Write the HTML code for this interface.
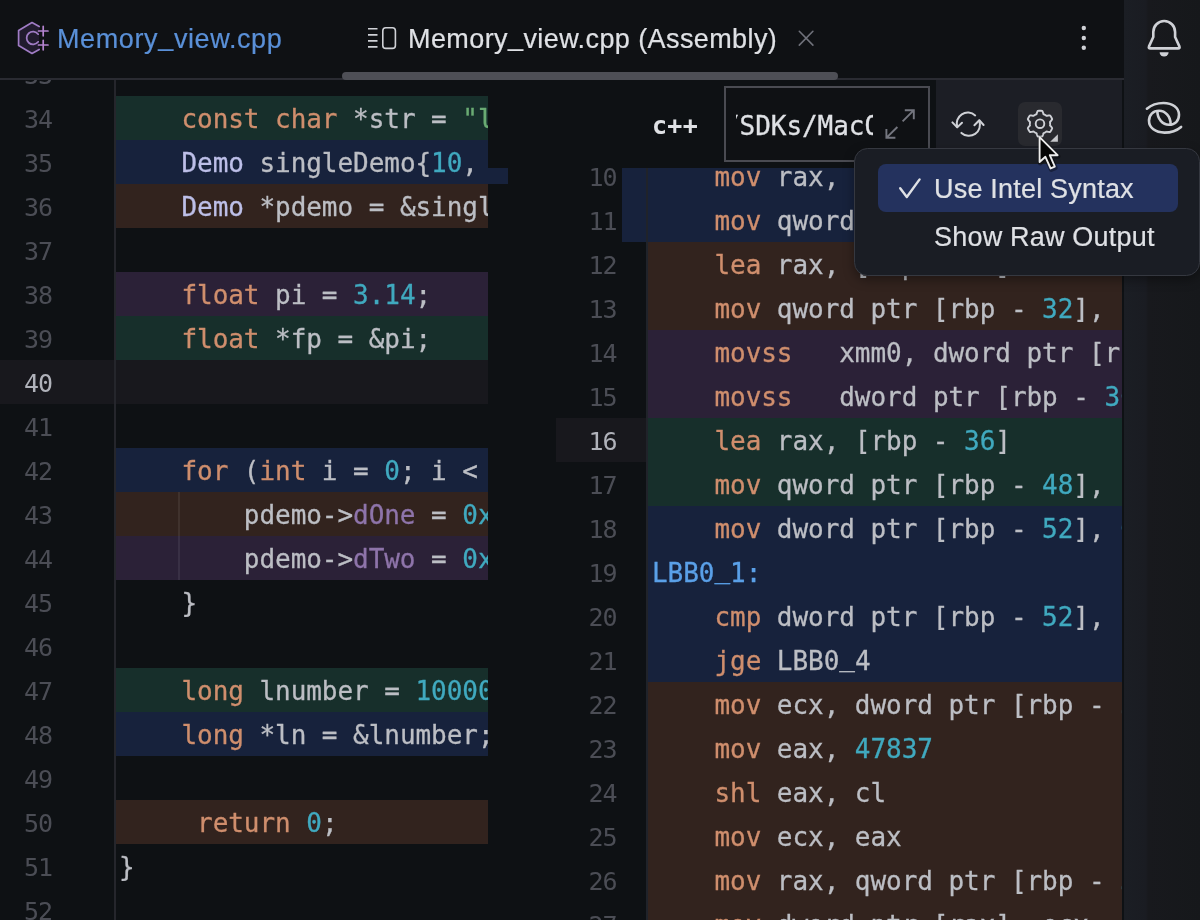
<!DOCTYPE html>
<html lang="en">
<head>
<meta charset="utf-8">
<title>Memory_view.cpp (Assembly)</title>
<style>
*{box-sizing:border-box;margin:0;padding:0}
html,body{width:1200px;height:920px;overflow:hidden;background:#0e1114}
body{position:relative;font-family:"Liberation Sans",sans-serif;color:#dfe1e5}
.abs{position:absolute}
.u{position:relative;top:-4px}
.tabtxt .u{top:-3.5px}
.code,.ln,.tabtxt,.mitxt,.gs{will-change:transform}
.mono{font-family:"DejaVu Sans Mono","Liberation Mono",monospace;font-size:26px;letter-spacing:-0.05px;white-space:pre}
#tabbar{left:0;top:0;width:1200px;height:80px;background:#0f1114;border-bottom:2px solid #2a2b32}
.tabtxt{-webkit-text-stroke:.2px;position:absolute;top:23px;font-size:27px;line-height:32px;letter-spacing:.62px;white-space:nowrap}
#thumb{left:342px;top:72px;width:496px;height:8px;border-radius:4px;background:#4e4f56}
#left{left:0;top:80px;width:488px;height:840px;overflow:hidden}
#lgutline{left:114px;top:80px;width:2px;height:840px;background:#25262c}
#lstrip{left:488px;top:168px;width:20px;height:16px;background:#17223c}
.ln{position:absolute;left:0;width:52px;text-align:right;color:#4b4d55;height:44px;line-height:48px;font-size:25px;letter-spacing:-1px;padding-right:0}
.lncur{color:#b0b2ba}
.band{position:absolute;height:44px}
.code{position:absolute;height:44px;line-height:46px;color:#bcbec4;-webkit-text-stroke:.3px}
.g{background:#172f2b}.b{background:#17223c}.o{background:#32231e}.p{background:#2b2137}.cur{background:#18181d}
.k{color:#cf8e6d}.n{color:#40a9bf}.s{color:#6aab73}.t{color:#bdbfe8}.f{color:#8e74aa}.l{color:#5aa0e8}
#right{left:556px;top:168px;width:566px;height:752px;overflow:hidden}
#sidebar{left:1123.5px;top:0;width:77px;height:920px;background:linear-gradient(90deg,#1b1e24 0,#1a1c22 22px,#18191d 24px,#16181b 100%)}
#popup{left:854px;top:147.5px;width:346px;height:128px;border-radius:13.5px;background:#1a1d24;border:1.5px solid #353840;box-shadow:0 4px 11px rgba(0,0,0,.36)}
.mi{position:absolute;left:22.5px;width:300px;height:48px;border-radius:8px;font-size:27px;line-height:50px;padding-left:56px;letter-spacing:.2px;white-space:nowrap;color:#dfe1e5;-webkit-text-stroke:.2px}
</style>
</head>
<body>
<!-- LEFT EDITOR -->
<div id="left" class="abs mono">
<div class="ln" style="top:-28px">33</div>
<div class="band g" style="left:116px;top:16px;width:372px"></div>
<div class="ln" style="top:16px">34</div>
<div class="code" style="left:119.1px;top:16px">    <span class="k">const</span> <span class="k">char</span> *str = <span class="s">"lorem ipsum"</span>;</div>
<div class="band b" style="left:116px;top:60px;width:372px"></div>
<div class="ln" style="top:60px">35</div>
<div class="code" style="left:119.1px;top:60px">    <span class="t">Demo</span> singleDemo{<span class="n">10</span>, <span class="n">20</span>};</div>
<div class="band o" style="left:116px;top:104px;width:372px"></div>
<div class="ln" style="top:104px">36</div>
<div class="code" style="left:119.1px;top:104px">    <span class="t">Demo</span> *pdemo = &amp;singleDemo;</div>
<div class="ln" style="top:148px">37</div>
<div class="band p" style="left:116px;top:192px;width:372px"></div>
<div class="ln" style="top:192px">38</div>
<div class="code" style="left:119.1px;top:192px">    <span class="k">float</span> pi = <span class="n">3.14</span>;</div>
<div class="band g" style="left:116px;top:236px;width:372px"></div>
<div class="ln" style="top:236px">39</div>
<div class="code" style="left:119.1px;top:236px">    <span class="k">float</span> *fp = &amp;pi;</div>
<div class="band cur" style="left:0;top:280px;width:488px"></div>
<div class="ln lncur" style="top:280px">40</div>
<div class="ln" style="top:324px">41</div>
<div class="band b" style="left:116px;top:368px;width:372px"></div>
<div class="ln" style="top:368px">42</div>
<div class="code" style="left:119.1px;top:368px">    <span class="k">for</span> (<span class="k">int</span> i = <span class="n">0</span>; i &lt; <span class="n">10</span>; i++) {</div>
<div class="band o" style="left:116px;top:412px;width:372px"></div>
<div class="ln" style="top:412px">43</div>
<div class="code" style="left:119.1px;top:412px">        pdemo-&gt;<span class="f">dOne</span> = <span class="n">0xAA</span>;</div>
<div class="band p" style="left:116px;top:456px;width:372px"></div>
<div class="ln" style="top:456px">44</div>
<div class="code" style="left:119.1px;top:456px">        pdemo-&gt;<span class="f">dTwo</span> = <span class="n">0xBB</span>;</div>
<div class="ln" style="top:500px">45</div>
<div class="code" style="left:119.1px;top:500px">    }</div>
<div class="ln" style="top:544px">46</div>
<div class="band g" style="left:116px;top:588px;width:372px"></div>
<div class="ln" style="top:588px">47</div>
<div class="code" style="left:119.1px;top:588px">    <span class="k">long</span> lnumber = <span class="n">100000</span>;</div>
<div class="band b" style="left:116px;top:632px;width:372px"></div>
<div class="ln" style="top:632px">48</div>
<div class="code" style="left:119.1px;top:632px">    <span class="k">long</span> *ln = &amp;lnumber;</div>
<div class="ln" style="top:676px">49</div>
<div class="band o" style="left:116px;top:720px;width:372px"></div>
<div class="ln" style="top:720px">50</div>
<div class="code" style="left:119.1px;top:720px">     <span class="k">return</span> <span class="n">0</span>;</div>
<div class="ln" style="top:764px">51</div>
<div class="code" style="left:119.1px;top:764px">}</div>
<div class="ln" style="top:808px">52</div>
<div class="abs" style="left:178px;top:412px;width:1.5px;height:88px;background:rgba(255,255,255,.07)"></div>
</div>
<div id="lgutline" class="abs"></div>
<div id="lstrip" class="abs"></div>
<!-- RIGHT PANEL -->
<div id="right" class="abs mono">
<div class="band b" style="left:66px;top:-14px;width:500px"></div>
<div class="ln" style="left:0;width:60.5px;top:-14px">10</div>
<div class="code" style="left:95.60000000000002px;top:-14px">    <span class="k">mov</span> rax, qword ptr [rip + L<span class="u">_</span>.str]</div>
<div class="band b" style="left:66px;top:30px;width:500px"></div>
<div class="ln" style="left:0;width:60.5px;top:30px">11</div>
<div class="code" style="left:95.60000000000002px;top:30px">    <span class="k">mov</span> qword ptr [rbp - <span class="n">16</span>], rax</div>
<div class="band o" style="left:91px;top:74px;width:475px"></div>
<div class="ln" style="left:0;width:60.5px;top:74px">12</div>
<div class="code" style="left:95.60000000000002px;top:74px">    <span class="k">lea</span> rax, [rbp - <span class="n">24</span>]</div>
<div class="band o" style="left:91px;top:118px;width:475px"></div>
<div class="ln" style="left:0;width:60.5px;top:118px">13</div>
<div class="code" style="left:95.60000000000002px;top:118px">    <span class="k">mov</span> qword ptr [rbp - <span class="n">32</span>], rax</div>
<div class="band p" style="left:91px;top:162px;width:475px"></div>
<div class="ln" style="left:0;width:60.5px;top:162px">14</div>
<div class="code" style="left:95.60000000000002px;top:162px">    <span class="k">movss</span>   xmm0, dword ptr [rip + LCPI0<span class="u">_</span>0]</div>
<div class="band p" style="left:91px;top:206px;width:475px"></div>
<div class="ln" style="left:0;width:60.5px;top:206px">15</div>
<div class="code" style="left:95.60000000000002px;top:206px">    <span class="k">movss</span>   dword ptr [rbp - <span class="n">36</span>], xmm0</div>
<div class="band g" style="left:91px;top:250px;width:475px"></div>
<div class="band cur" style="left:0;top:250px;width:91px"></div>
<div class="ln lncur" style="left:0;width:60.5px;top:250px">16</div>
<div class="code" style="left:95.60000000000002px;top:250px">    <span class="k">lea</span> rax, [rbp - <span class="n">36</span>]</div>
<div class="band g" style="left:91px;top:294px;width:475px"></div>
<div class="ln" style="left:0;width:60.5px;top:294px">17</div>
<div class="code" style="left:95.60000000000002px;top:294px">    <span class="k">mov</span> qword ptr [rbp - <span class="n">48</span>], rax</div>
<div class="band b" style="left:91px;top:338px;width:475px"></div>
<div class="ln" style="left:0;width:60.5px;top:338px">18</div>
<div class="code" style="left:95.60000000000002px;top:338px">    <span class="k">mov</span> dword ptr [rbp - <span class="n">52</span>], <span class="n">0</span></div>
<div class="band b" style="left:91px;top:382px;width:475px"></div>
<div class="ln" style="left:0;width:60.5px;top:382px">19</div>
<div class="code" style="left:95.60000000000002px;top:382px"><span class="l">LBB0<span class="u">_</span>1:</span></div>
<div class="band b" style="left:91px;top:426px;width:475px"></div>
<div class="ln" style="left:0;width:60.5px;top:426px">20</div>
<div class="code" style="left:95.60000000000002px;top:426px">    <span class="k">cmp</span> dword ptr [rbp - <span class="n">52</span>], <span class="n">10</span></div>
<div class="band b" style="left:91px;top:470px;width:475px"></div>
<div class="ln" style="left:0;width:60.5px;top:470px">21</div>
<div class="code" style="left:95.60000000000002px;top:470px">    <span class="k">jge</span> LBB0<span class="u">_</span>4</div>
<div class="band o" style="left:91px;top:514px;width:475px"></div>
<div class="ln" style="left:0;width:60.5px;top:514px">22</div>
<div class="code" style="left:95.60000000000002px;top:514px">    <span class="k">mov</span> ecx, dword ptr [rbp - <span class="n">52</span>]</div>
<div class="band o" style="left:91px;top:558px;width:475px"></div>
<div class="ln" style="left:0;width:60.5px;top:558px">23</div>
<div class="code" style="left:95.60000000000002px;top:558px">    <span class="k">mov</span> eax, <span class="n">47837</span></div>
<div class="band o" style="left:91px;top:602px;width:475px"></div>
<div class="ln" style="left:0;width:60.5px;top:602px">24</div>
<div class="code" style="left:95.60000000000002px;top:602px">    <span class="k">shl</span> eax, cl</div>
<div class="band o" style="left:91px;top:646px;width:475px"></div>
<div class="ln" style="left:0;width:60.5px;top:646px">25</div>
<div class="code" style="left:95.60000000000002px;top:646px">    <span class="k">mov</span> ecx, eax</div>
<div class="band o" style="left:91px;top:690px;width:475px"></div>
<div class="ln" style="left:0;width:60.5px;top:690px">26</div>
<div class="code" style="left:95.60000000000002px;top:690px">    <span class="k">mov</span> rax, qword ptr [rbp - <span class="n">32</span>]</div>
<div class="band o" style="left:91px;top:734px;width:475px"></div>
<div class="ln" style="left:0;width:60.5px;top:734px">27</div>
<div class="code" style="left:95.60000000000002px;top:734px">    <span class="k">mov</span> dword ptr [rax], ecx</div>
<div class="abs" style="left:90px;top:0;width:2px;height:752px;background:#20232a"></div>
</div>
<!-- TOOLBAR -->
<div id="toolbar">
<div class="abs" style="left:936px;top:80px;width:186px;height:88px;background:#1c1e25"></div>
<div class="abs mono gs" style="left:651.5px;top:104px;height:44px;line-height:44px;color:#dfe1e5;font-weight:bold;font-size:25px;letter-spacing:.3px">c++</div>
<div class="abs" style="left:724px;top:86px;width:206px;height:76px;border:2px solid #4a4b52;background:#0f1114"></div>
<div class="abs mono gs" style="left:735.5px;top:104px;width:136.5px;height:44px;line-height:44px;overflow:hidden;color:#dfe1e5;-webkit-text-stroke:.3px"><span style="margin-left:-12px">/SDKs/MacOSX.sdk</span></div>
<svg class="abs" style="left:882px;top:106px" width="36" height="36" viewBox="882 106 36 36">
<path d="M897.4 127 L886.6 137.6 M886.4 129 V137.8 H895.4 M902.6 121.4 L913.6 110.4 M904.8 110.2 H913.8 V119.2" fill="none" stroke="#74767f" stroke-width="1.9" stroke-linecap="butt" stroke-linejoin="miter"/>
</svg>
<svg class="abs" style="left:948px;top:106px" width="40" height="36" viewBox="948 106 40 36">
<path d="M957.2 127 A11.1 11.1 0 0 1 975.2 115.4 M979.2 120.6 A11.1 11.1 0 0 1 961.4 132.9" fill="none" stroke="#cfd1d6" stroke-width="2" stroke-linecap="round"/>
<path d="M952.4 122.4 L957.2 127.4 L962 122.8 M974.4 125.2 L979.3 120.2 L983.6 125" fill="none" stroke="#cfd1d6" stroke-width="2" stroke-linecap="round" stroke-linejoin="round"/>
</svg>
<svg class="abs" style="left:1018px;top:102px" width="44" height="44" viewBox="1018 102 44 44">
<rect x="1018" y="102" width="44" height="44" rx="7" fill="#292a2f"/>
<path d="M1040.00 110.70 L1040.45 110.71 L1040.91 110.73 L1041.36 110.77 L1041.81 110.83 L1042.24 110.97 L1042.58 111.57 L1042.86 112.21 L1043.10 112.87 L1043.31 113.52 L1043.48 114.14 L1043.78 114.34 L1044.11 114.47 L1044.43 114.62 L1044.74 114.78 L1045.05 114.95 L1045.35 115.13 L1045.65 115.33 L1045.94 115.53 L1046.22 115.74 L1046.54 115.91 L1047.16 115.75 L1047.82 115.60 L1048.52 115.48 L1049.22 115.40 L1049.90 115.39 L1050.24 115.70 L1050.52 116.06 L1050.78 116.43 L1051.02 116.81 L1051.26 117.20 L1051.48 117.60 L1051.68 118.00 L1051.88 118.41 L1052.05 118.83 L1052.15 119.28 L1051.79 119.87 L1051.38 120.44 L1050.93 120.98 L1050.46 121.48 L1050.02 121.93 L1050.00 122.29 L1050.04 122.64 L1050.08 123.00 L1050.09 123.35 L1050.10 123.70 L1050.09 124.05 L1050.08 124.40 L1050.04 124.76 L1050.00 125.11 L1050.02 125.47 L1050.46 125.92 L1050.93 126.42 L1051.38 126.96 L1051.79 127.53 L1052.15 128.12 L1052.05 128.57 L1051.88 128.99 L1051.68 129.40 L1051.48 129.80 L1051.26 130.20 L1051.02 130.59 L1050.78 130.97 L1050.52 131.34 L1050.24 131.70 L1049.90 132.01 L1049.22 132.00 L1048.52 131.92 L1047.82 131.80 L1047.16 131.65 L1046.54 131.49 L1046.22 131.66 L1045.94 131.87 L1045.65 132.07 L1045.35 132.27 L1045.05 132.45 L1044.74 132.62 L1044.43 132.78 L1044.11 132.93 L1043.78 133.06 L1043.48 133.26 L1043.31 133.88 L1043.10 134.53 L1042.86 135.19 L1042.58 135.83 L1042.24 136.43 L1041.81 136.57 L1041.36 136.63 L1040.91 136.67 L1040.45 136.69 L1040.00 136.70 L1039.55 136.69 L1039.09 136.67 L1038.64 136.63 L1038.19 136.57 L1037.76 136.43 L1037.42 135.83 L1037.14 135.19 L1036.90 134.53 L1036.69 133.88 L1036.52 133.26 L1036.22 133.06 L1035.89 132.93 L1035.57 132.78 L1035.26 132.62 L1034.95 132.45 L1034.65 132.27 L1034.35 132.07 L1034.06 131.87 L1033.78 131.66 L1033.46 131.49 L1032.84 131.65 L1032.18 131.80 L1031.48 131.92 L1030.78 132.00 L1030.10 132.01 L1029.76 131.70 L1029.48 131.34 L1029.22 130.97 L1028.98 130.59 L1028.74 130.20 L1028.52 129.80 L1028.32 129.40 L1028.12 128.99 L1027.95 128.57 L1027.85 128.12 L1028.21 127.53 L1028.62 126.96 L1029.07 126.42 L1029.54 125.92 L1029.98 125.47 L1030.00 125.11 L1029.96 124.76 L1029.92 124.40 L1029.91 124.05 L1029.90 123.70 L1029.91 123.35 L1029.92 123.00 L1029.96 122.64 L1030.00 122.29 L1029.98 121.93 L1029.54 121.48 L1029.07 120.98 L1028.62 120.44 L1028.21 119.87 L1027.85 119.28 L1027.95 118.83 L1028.12 118.41 L1028.32 118.00 L1028.52 117.60 L1028.74 117.20 L1028.98 116.81 L1029.22 116.43 L1029.48 116.06 L1029.76 115.70 L1030.10 115.39 L1030.78 115.40 L1031.48 115.48 L1032.18 115.60 L1032.84 115.75 L1033.46 115.91 L1033.78 115.74 L1034.06 115.53 L1034.35 115.33 L1034.65 115.13 L1034.95 114.95 L1035.26 114.78 L1035.57 114.62 L1035.89 114.47 L1036.22 114.34 L1036.52 114.14 L1036.69 113.52 L1036.90 112.87 L1037.14 112.21 L1037.42 111.57 L1037.76 110.97 L1038.19 110.83 L1038.64 110.77 L1039.09 110.73 L1039.55 110.71 L1040.00 110.70 Z" fill="none" stroke="#cfd1d6" stroke-width="1.9" stroke-linejoin="round"/>
<circle cx="1040" cy="123.7" r="4.3" fill="none" stroke="#cfd1d6" stroke-width="1.9"/>
<path d="M1050.2 141.8 H1057.9 V134.2 Z" fill="#c8c9cd"/>
</svg>
</div>
<!-- TAB BAR -->
<div id="tabbar" class="abs">
<svg class="abs" style="left:14px;top:18px" width="40" height="40" viewBox="14 18 40 40">
<path d="M39.2 26.6 L32 22.6 L18.6 30.4 L18.6 45.6 L32 53.4 L39.2 49.4" fill="#211b2e" stroke="#a07cc5" stroke-width="1.7" stroke-linejoin="round" stroke-linecap="round"/>
<path d="M38.2 34.2 A6.4 6.4 0 1 0 38.2 41.8" fill="none" stroke="#a07cc5" stroke-width="1.7" stroke-linecap="round"/>
<path d="M38.5 31 H48 M43.2 26.3 V35.8 M38.5 45 H48 M43.2 40.3 V49.8" stroke="#b483cf" stroke-width="1.7" stroke-linecap="round" fill="none"/>
</svg>
<div class="tabtxt" style="left:57px;color:#5a90d8">Memory<span class="u">_</span>view.cpp</div>
<svg class="abs" style="left:364px;top:22px" width="36" height="32" viewBox="364 22 36 32">
<path d="M368 28.8 H377.5 M368 34.9 H377.5 M368 40.9 H377.5 M368 46.9 H377.5" stroke="#cfd1d6" stroke-width="1.6" stroke-linecap="butt" fill="none"/>
<rect x="382.8" y="27.8" width="12.6" height="20.6" rx="3" fill="none" stroke="#cfd1d6" stroke-width="1.6"/>
</svg>
<div class="tabtxt" style="left:407.5px;color:#dfe1e5;letter-spacing:.41px">Memory<span class="u">_</span>view.cpp (Assembly)</div>
<svg class="abs" style="left:795px;top:27px" width="22" height="22" viewBox="795 27 22 22">
<path d="M799.3 31.3 L812.9 45.1 M812.9 31.3 L799.3 45.1" stroke="#6f717a" stroke-width="1.6" stroke-linecap="round" fill="none"/>
</svg>
<svg class="abs" style="left:1078px;top:22px" width="12" height="32" viewBox="1078 22 12 32">
<circle cx="1083.8" cy="28" r="2.2" fill="#cfd1d6"/><circle cx="1083.8" cy="38" r="2.2" fill="#cfd1d6"/><circle cx="1083.8" cy="47.8" r="2.2" fill="#cfd1d6"/>
</svg>
</div>
<div id="thumb" class="abs"></div>
<!-- SIDEBAR -->
<div id="sidebar" class="abs"></div>
<svg class="abs" style="left:1140px;top:14px" width="48" height="48" viewBox="1140 14 48 48">
<path d="M1153.3 37 V31.9 A10.9 10.9 0 0 1 1175.1 31.9 V37 L1179.4 46.4 Q1180.2 48.4 1178 48.4 H1150.4 Q1148.2 48.4 1149 46.4 Z" fill="none" stroke="#cfd1d6" stroke-width="2.6" stroke-linejoin="round"/>
<path d="M1159.6 52.2 H1168.6 A4.5 4.3 0 0 1 1159.6 52.2 Z" fill="#cfd1d6"/>
</svg>
<svg class="abs" style="left:1140px;top:96px" width="48" height="46" viewBox="-24 -23 48 46">
<g transform="translate(0,-1.2)" fill="none" stroke="#cfd1d6" stroke-width="2.6" stroke-linecap="round">
<path id="aiarm" d="M-17.1 -9.1 C-12.5 -13 -6.5 -14.8 -0.5 -14.8 C8.5 -14.8 15 -10 15 -3 C15 3 11 7 5 7 C-1.5 7 -6.6 1 -6.6 -6.2"/>
<path d="M-17.1 -9.1 C-12.5 -13 -6.5 -14.8 -0.5 -14.8 C8.5 -14.8 15 -10 15 -3 C15 3 11 7 5 7 C-1.5 7 -6.6 1 -6.6 -6.2" transform="rotate(180)"/>
</g>
</svg>
<!-- POPUP -->
<div id="popup" class="abs">
<div class="mi" style="top:15px;background:#24325e"><svg class="abs" style="left:20px;top:12px" width="26" height="24" viewBox="0 0 26 24"><path d="M2.2 12.2 L8.8 21 L21.6 3.4" fill="none" stroke="#dfe1e5" stroke-width="2.4" stroke-linecap="round" stroke-linejoin="round"/></svg><span class="gs" style="display:inline-block">Use Intel Syntax</span></div>
<div class="mi" style="top:63px"><span class="gs" style="display:inline-block">Show Raw Output</span></div>
</div>
<svg class="abs" style="left:1030px;top:126px" width="40" height="50" viewBox="1030 126 40 50">
<path d="M1039.6 137.2 V162 L1045.4 156.8 L1050.6 168.4 L1054.8 166.6 L1049.8 155.2 H1057.6 Z" fill="none" stroke="rgba(0,0,0,.35)" stroke-width="4.6" stroke-linejoin="round" transform="translate(0.6,1.2)"/>
<path d="M1039.6 137.2 V162 L1045.4 156.8 L1050.6 168.4 L1054.8 166.6 L1049.8 155.2 H1057.6 Z" fill="#050505" stroke="#ececec" stroke-width="1.9" stroke-linejoin="round"/>
</svg>
</body>
</html>
